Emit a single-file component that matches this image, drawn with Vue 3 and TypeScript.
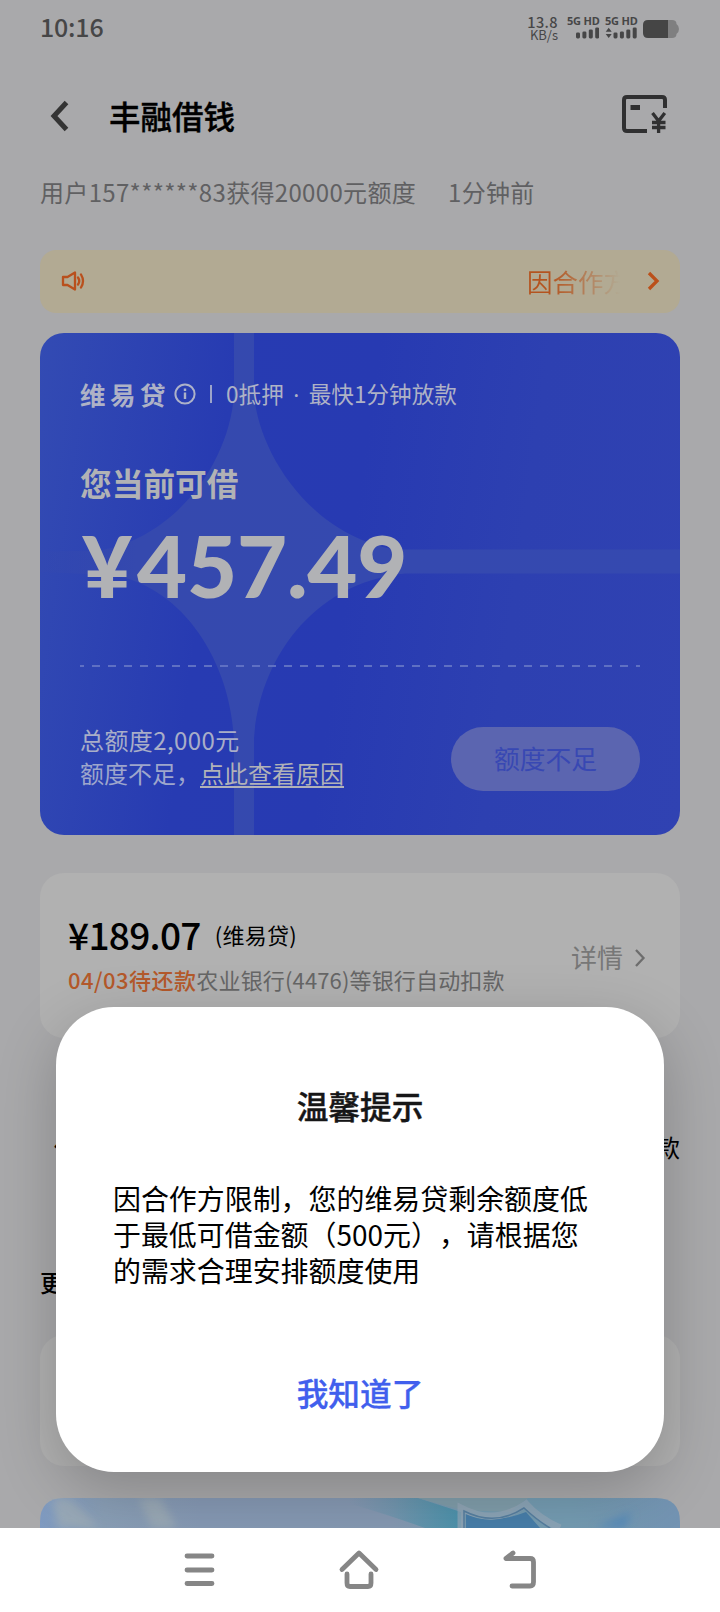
<script setup lang="ts">
interface Bar {
  x: number
  h: number
}

const bars: Bar[] = [
  { x: 0, h: 6 },
  { x: 6.4, h: 7 },
  { x: 12.8, h: 9 },
  { x: 19.2, h: 11 },
]

const dialogLines: string[] = [
  '因合作方限制，您的维易贷剩余额度低',
  '于最低可借金额（500元），请根据您',
  '的需求合理安排额度使用',
]
</script>

<template>
  <div class="screen">
    <main class="page">
      <div class="status">
        <span class="clock">10:16</span>
        <div class="status-right">
          <div class="speed"><span class="rate">13.8</span><span class="unit">KB/s</span></div>
          <div class="sim">
            <span class="net">5G HD</span>
            <svg class="signal" width="32" height="12" viewBox="0 0 32 12">
              <rect v-for="b in bars" :key="b.x" :x="b.x + 9" :y="11.4 - b.h" width="4" :height="b.h" rx="1.4" />
            </svg>
          </div>
          <div class="sim">
            <span class="net">5G HD</span>
            <svg class="signal" width="32" height="12" viewBox="0 0 32 12">
              <path d="M.7 4.8 3.7.7 6.7 4.8ZM.7 6.9H6.7L3.7 11Z" />
              <rect v-for="b in bars" :key="b.x" :x="b.x + 8.5" :y="11.4 - b.h" width="4" :height="b.h" rx="1.4" />
            </svg>
          </div>
          <svg class="battery" width="37" height="18" viewBox="0 0 37 18">
            <path d="M25 0h4q4.500 0 4.500 4 2.500 1.800 2.500 5t-2.500 5q0 4-4.500 4h-4z" fill="#7f7f80" />
            <path d="M5 0H25V18H5Q0 18 0 13V5Q0 0 5 0Z" fill="#454545" />
          </svg>
        </div>
      </div>

      <header class="header">
        <svg class="back" width="20" height="32" viewBox="0 0 20 32">
          <path d="M16.500 2.500 4 16 16.500 29.500" fill="none" stroke="#343434" stroke-width="5" />
        </svg>
        <h1>丰融借钱</h1>
        <svg class="bill" width="46" height="40" viewBox="0 0 46 40" fill="none" stroke="#303031">
          <path d="M25 36H5Q2 36 2 33V5Q2 2 5 2H40Q43 2 43 5V13" stroke-width="4" />
          <path d="M8.500 12.500H18" stroke-width="5" />
          <path d="M30.500 18 36.600 26 42.800 18M36.600 25.500V38M30 27.500H43.500M30 32.500H43.500" stroke-width="3.300" />
        </svg>
      </header>

      <div class="ticker"><span>用户157******83获得20000元额度</span><span>1分钟前</span></div>

      <section class="notice">
        <svg width="24" height="22" viewBox="0 0 24 22" fill="none" stroke="#b9501d" stroke-width="2.300" stroke-linejoin="round">
          <path d="M2 7H6.500L14 2.500V19.500L6.500 15H2Z" />
          <path d="M17 7.500Q19.500 11 17 14.500M20 4.500Q24 11 20 17.500" stroke-linecap="round" />
        </svg>
        <span class="notice-text">因合作方</span>
        <svg width="14" height="20" viewBox="0 0 14 20">
          <path d="M2 2 10 10 2 18" fill="none" stroke="#bb501a" stroke-width="3.300" />
        </svg>
      </section>

      <section class="credit">
        <svg class="star" width="640" height="502" viewBox="0 0 640 502">
          <defs>
            <linearGradient id="beam" gradientUnits="userSpaceOnUse" x1="0" x2="640" y1="0" y2="0">
              <stop offset="0" stop-color="#3549ae" stop-opacity=".2" />
              <stop offset=".15" stop-color="#3549ae" />
              <stop offset="1" stop-color="#3549b0" />
            </linearGradient>
          </defs>
          <path fill="url(#beam)" d="M194 0H214V62C219 120 270 202 355 216.500H640V240.500H365C270 250 219 330 214 405V502H194V405C189 320 136 250 70 242L0 239V218.500L60 217.500C136 204 189 130 194 62Z" />
        </svg>
        <div class="brand">
          <b>维易贷</b>
          <svg width="22" height="22" viewBox="0 0 22 22" fill="none" stroke="#adb2c9">
            <circle cx="11" cy="11" r="9.600" stroke-width="2" />
            <path d="M11 9.500V16M11 5.500V8" stroke-width="2.400" />
          </svg>
          <i></i>
          <span class="slogan">0抵押<span class="dot">·</span>最快1分钟放款</span>
        </div>
        <div class="label">您当前可借</div>
        <div class="amount"><span class="yen">¥</span>457.49</div>
        <svg class="dash" width="560" height="2" viewBox="0 0 560 2">
          <path d="M-4 1H560" stroke="#5f70c3" stroke-width="2" stroke-dasharray="8 8" fill="none" />
        </svg>
        <div class="credit-foot">
          <div class="limit">
            <p class="total">总额度2,000元</p>
            <p>额度不足，<u>点此查看原因</u></p>
          </div>
          <div class="pill">额度不足</div>
        </div>
      </section>

      <section class="repay">
        <div>
          <div class="due"><span class="sum">¥189.07</span><span class="product">(维易贷)</span></div>
          <div class="bank"><b>04/03待还款</b><span>农业银行(4476)等银行自动扣款</span></div>
        </div>
        <div class="detail">
          <span>详情</span>
          <svg width="12" height="20" viewBox="0 0 12 20">
            <path d="M2 2 9.500 10 2 18" fill="none" stroke="#6d6d6d" stroke-width="2.300" />
          </svg>
        </div>
      </section>

      <div class="shortcuts"><span>借</span><span>款</span></div>
      <div class="more">更</div>
      <div class="tile"></div>

      <svg class="banner" width="640" height="30" viewBox="0 0 640 30">
        <defs>
          <linearGradient id="sky" x1="0" x2="1" y1="0" y2="0">
            <stop offset="0" stop-color="#7f9ac0" />
            <stop offset=".1" stop-color="#899eb5" />
            <stop offset=".25" stop-color="#8598b3" />
            <stop offset=".55" stop-color="#8598b1" />
            <stop offset=".68" stop-color="#749bb0" />
            <stop offset=".83" stop-color="#749bb1" />
            <stop offset="1" stop-color="#7393b2" />
          </linearGradient>
          <linearGradient id="teal" x1="0" x2="1" y1="0" y2="0">
            <stop offset="0" stop-color="#5c91a9" stop-opacity="0" />
            <stop offset="1" stop-color="#4b91ab" />
          </linearGradient>
          <filter id="soft" x="-50%" y="-50%" width="200%" height="200%"><feGaussianBlur stdDeviation="4" /></filter>
        </defs>
        <path d="M0 30V24Q0 0 24 0H616Q640 0 640 24V30Z" fill="url(#sky)" />
        <path d="M12 0H30L60 30H18ZM98 0H120L137 30H112Z" fill="#a0adb5" opacity=".7" filter="url(#soft)" />
        <path d="M310 0H378L421 14V30H385Q340 14 310 6Z" fill="url(#teal)" />
        <path d="M378 0H488L470 14 421 12Z" fill="#7f9ca9" />
        <path d="M426 30V16Q450 28 486 14L500 30Z" fill="#477da8" />
        <path d="M421 30V10Q455 28 486 6 498 20 520 30" fill="none" stroke="#94a7b8" stroke-width="7" opacity=".7" />
        <path d="M424 30V13Q455 29 484 10 498 23 510 30" fill="none" stroke="#567e9f" stroke-width="1.500" />
        <path d="M555 30 592 14 585 30Z" fill="#568ab8" filter="url(#soft)" />
      </svg>
    </main>

    <div class="dialog" role="dialog">
      <h2>温馨提示</h2>
      <div class="message"><p v-for="line in dialogLines" :key="line">{{ line }}</p></div>
      <button type="button">我知道了</button>
    </div>

    <nav class="nav">
      <svg width="32" height="36" viewBox="0 0 32 36"><path d="M4 4H29M4 18H29M4 31.500H29" /></svg>
      <svg width="42" height="42" viewBox="0 0 42 42">
        <path d="M4 20.500 21 4 38 20.500" />
        <path d="M9 25V34Q9 37.500 12 37.500H30Q33 37.500 33 34V25" />
      </svg>
      <svg width="34" height="40" viewBox="0 0 34 40">
        <path d="M10 3 3 8.500H27Q30.500 8.500 30.500 12V32Q30.500 36 27 36H9" />
      </svg>
    </nav>
  </div>
</template>

<style>
body {
  background: #a9a9ab;
}
</style>

<style scoped>
.screen {
  position: relative;
  width: 720px;
  height: 1612px;
  overflow: hidden;
  background: #a9a9ab;
  color: #000;
  font-family: "Noto Sans CJK SC", sans-serif;
  text-spacing-trim: space-all;
  white-space: nowrap;
}
h1, h2, p {
  margin: 0;
}
svg {
  display: block;
  flex: none;
}
.page {
  height: 1528px;
  overflow: hidden;
  box-sizing: border-box;
  padding: 0 40px;
}
.status {
  height: 56px;
  display: flex;
  align-items: center;
  justify-content: space-between;
  color: #464647;
}
.clock {
  font-size: 25px;
  font-weight: 500;
  line-height: 52px;
  height: 56px;
  letter-spacing: -0.2px;
}
.status-right {
  display: flex;
  align-items: flex-start;
  height: 26px;
}
.speed {
  width: 34px;
  margin-right: 9px;
  text-align: right;
}
.speed span {
  display: block;
  height: 12.500px;
  line-height: 13px;
}
.rate {
  font-size: 14.500px;
  font-weight: 500;
  letter-spacing: 0.4px;
}
.unit {
  font-size: 13px;
}
.sim {
  width: 32px;
  margin-right: 6px;
}
.net {
  display: block;
  height: 12px;
  font: 700 11px/12px "Noto Sans", sans-serif;
  letter-spacing: -0.2px;
}
.signal {
  fill: #464647;
}
.battery {
  margin-top: 5px;
}
.header {
  height: 120px;
  display: flex;
  align-items: center;
}
.back {
  margin: 0 0 0 10px;
}
h1 {
  flex: 1;
  margin: 0 0 3px 39px;
  font-size: 31.500px;
  font-weight: 500;
  -webkit-text-stroke: 0.4px currentColor;
}
.bill {
  margin: 0 12px 2px 0;
}
.ticker {
  height: 34px;
  margin-bottom: 40px;
  display: flex;
  gap: 32px;
  line-height: 31px;
  font-size: 24px;
  letter-spacing: 0.33px;
  color: #606062;
}
.notice {
  box-sizing: border-box;
  height: 63px;
  margin-bottom: 20px;
  padding: 0 19px 2px 21px;
  display: flex;
  align-items: center;
  border-radius: 16px;
  background: #b2aa93;
}
.notice-text {
  width: 103px;
  margin: -1px 17px 0 auto;
  font-size: 25.500px;
  color: transparent;
  background: linear-gradient(90deg, #b4541f 22%, rgba(180, 84, 31, 0) 90%);
  -webkit-background-clip: text;
  background-clip: text;
}
.credit {
  position: relative;
  box-sizing: border-box;
  height: 502px;
  padding: 42px 40px 0;
  border-radius: 24px;
  overflow: hidden;
  background: linear-gradient(98deg, #334bb3 0%, #273bb2 28%, #273ab2 48%, #2d40b1 72%, #3042b2 100%);
  color: #b1b2b5;
}
.credit > * {
  position: relative;
}
.credit > .star {
  position: absolute;
  left: 0;
  top: 0;
}
.brand {
  height: 36px;
  display: flex;
  align-items: center;
  color: #aeb2c6;
}
.brand svg, .brand i {
  margin-top: 2px;
}
.brand b {
  width: 94px;
  font-size: 25.500px;
  font-weight: 700;
  letter-spacing: 4.500px;
}
.brand i {
  width: 2px;
  height: 18px;
  margin-left: 14px;
  margin-right: 14px;
  background: #9ca4ca;
}
.slogan {
  font-size: 22.600px;
}
.dot {
  display: inline-block;
  width: 25px;
  text-align: center;
  font-family: "Noto Sans", sans-serif;
}
.label {
  height: 46px;
  margin-top: 48px;
  line-height: 46px;
  font-size: 31.700px;
  font-weight: 700;
}
.amount {
  height: 90px;
  margin-top: 15px;
  line-height: 90px;
  font-family: Lato, "Noto Sans CJK SC", sans-serif;
  font-size: 86.500px;
  font-weight: 900;
  letter-spacing: -0.2px;
}
.yen {
  margin: 0 5px 0 2px;
}
.dash {
  margin-top: 55px;
}
.credit-foot {
  height: 66px;
  margin-top: 59px;
  display: flex;
  justify-content: space-between;
}
.limit {
  margin-top: -2px;
  font-size: 24px;
  line-height: 32.500px;
  color: #9ea6cc;
}
.total {
  color: #a9aec8;
  letter-spacing: 0.4px;
}
.limit u {
  color: #b1b2b8;
  text-decoration-thickness: 2px;
  text-underline-offset: 3px;
}
.pill {
  width: 189px;
  height: 64px;
  margin-top: 1px;
  border-radius: 32px;
  background: #5b65b0;
  color: #3848b3;
  font-size: 25.800px;
  line-height: 61px;
  text-align: center;
}
.repay {
  box-sizing: border-box;
  height: 165px;
  margin-top: 38px;
  padding: 34px 34px 0 28px;
  display: flex;
  justify-content: space-between;
  border-radius: 24px;
  background: #b1b1b1;
}
.due {
  height: 55px;
  display: flex;
  align-items: center;
}
.sum {
  font-size: 37px;
  font-weight: 500;
  line-height: 55px;
  letter-spacing: -0.7px;
}
.product {
  margin: -2px 0 0 14px;
  font-size: 22px;
  letter-spacing: 0.3px;
}
.bank {
  height: 34px;
  line-height: 34px;
  font-size: 22px;
  letter-spacing: 0.15px;
  color: #666;
}
.bank b {
  font-weight: 500;
  color: #b4592b;
  letter-spacing: 0.45px;
}
.detail {
  height: 98px;
  display: flex;
  align-items: center;
  gap: 11px;
  font-size: 26px;
  color: #777;
}
.detail svg {
  margin-top: 3px;
}
.shortcuts {
  height: 36px;
  margin-top: 91px;
  padding-left: 14px;
  display: flex;
  justify-content: space-between;
  font-size: 24px;
  line-height: 36px;
}
.more {
  height: 36px;
  margin-top: 99px;
  font-size: 24px;
  font-weight: 500;
  line-height: 36px;
}
.tile {
  height: 131px;
  margin: 35px 0 32px;
  border-radius: 24px;
  background: #b1b1b1;
}
.dialog {
  position: absolute;
  left: 56px;
  top: 1007px;
  width: 608px;
  height: 465px;
  box-sizing: border-box;
  padding: 74px 57px 0;
  border-radius: 58px;
  background: #fff;
  box-shadow: 0 18px 60px rgba(0, 0, 0, 0.21);
  text-align: center;
}
h2 {
  height: 48px;
  line-height: 48px;
  font-size: 31.700px;
  font-weight: 500;
  color: #161617;
  -webkit-text-stroke: 0.4px currentColor;
}
.message {
  margin-top: 51px;
  text-align: left;
  font-size: 27.950px;
  line-height: 36px;
}
button {
  display: block;
  width: 100%;
  margin-top: 80px;
  padding: 0;
  border: 0;
  background: none;
  color: #415fed;
  font: 500 31.700px/48px "Noto Sans CJK SC", sans-serif;
  -webkit-text-stroke: 0.3px currentColor;
}
.nav {
  position: relative;
  height: 84px;
  display: flex;
  align-items: center;
  justify-content: center;
  gap: 123px;
  background: #fff;
}
.nav path {
  fill: none;
  stroke: #868686;
  stroke-width: 4.800;
  stroke-linecap: round;
  stroke-linejoin: round;
}
</style>
